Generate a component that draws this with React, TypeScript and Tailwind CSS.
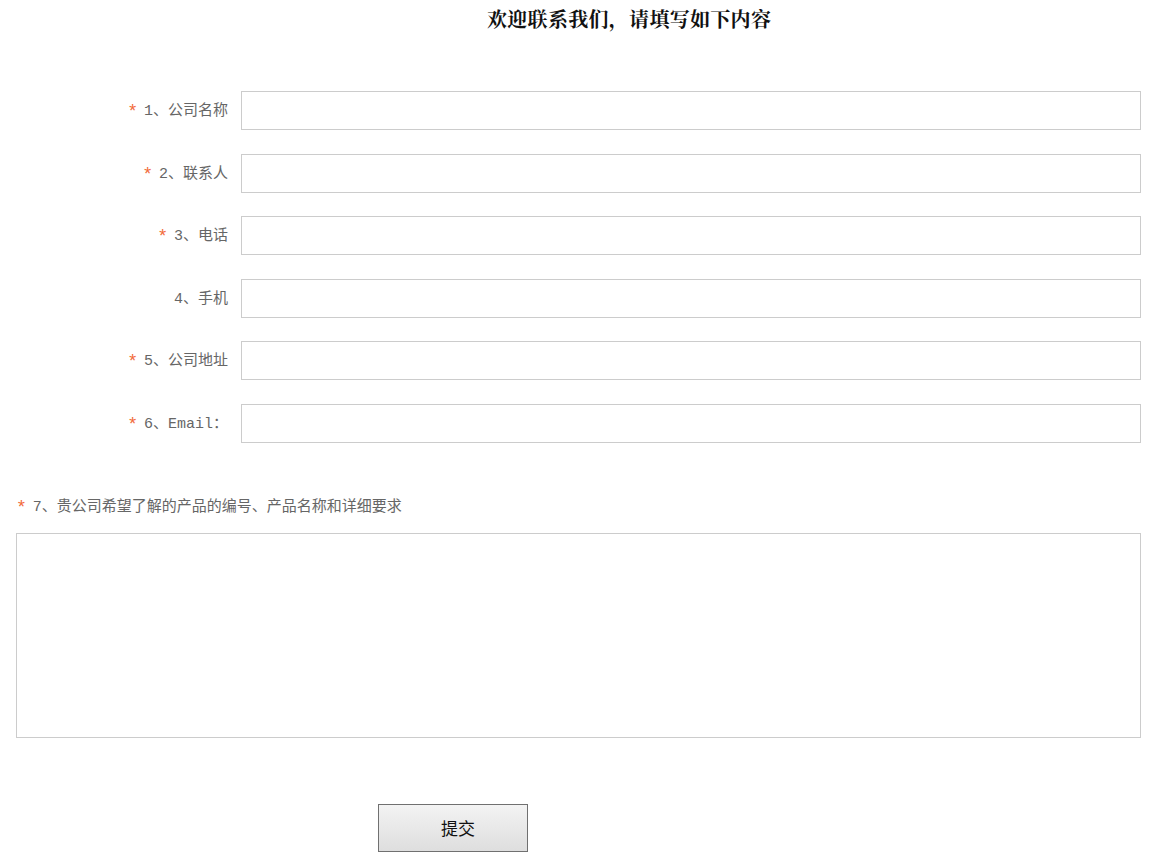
import React from "react";

const rows = [
  { req: true, label: "1、公司名称" },
  { req: true, label: "2、联系人" },
  { req: true, label: "3、电话" },
  { req: false, label: "4、手机" },
  { req: true, label: "5、公司地址" },
  { req: true, label: "6、Email：" },
];

const mono = '"Liberation Mono", "DejaVu Sans Mono", "Noto Sans CJK SC", monospace';

export default function App() {
  return (
    <div className="w-[1162px] h-[868px] bg-white text-[#666]">
      <h1
        className="pt-[8px] pl-[487px] text-[20px] leading-[22px] font-bold text-[#111] tracking-[0.3px]"
        style={{ fontFamily: '"Noto Serif CJK SC", "Liberation Serif", "Noto Sans CJK SC", serif' }}
      >
        欢迎联系我们，请填写如下内容
      </h1>
      <div className="mt-[61px] flex flex-col gap-[23.6px]">
        {rows.map((r) => (
          <div key={r.label} className="flex items-center">
            <div
              className="w-[228px] pt-[3px] text-right text-[15px] leading-[20px] flex justify-end items-center"
              style={{ fontFamily: mono }}
            >
              {r.req && (
                <span className="text-[#f26a3a] mr-[6px] text-[18px] leading-[20px]">*</span>
              )}
              <span>{r.label}</span>
            </div>
            <input className="ml-[13px] w-[900px] h-[39px] border border-[#ccc] outline-none" />
          </div>
        ))}
      </div>
      <div
        className="mt-[55px] pl-[16px] text-[15px] leading-[20px] flex items-center"
        style={{ fontFamily: mono }}
      >
        <span className="text-[#f26a3a] mr-[6px] text-[18px] leading-[20px]">*</span>
        <span>7、贵公司希望了解的产品的编号、产品名称和详细要求</span>
      </div>
      <textarea className="block ml-[16px] mt-[15px] w-[1125px] h-[205px] border border-[#ccc] outline-none resize-none" />
      <div className="pl-[378px] mt-[66px]">
        <button
          className="w-[150px] h-[48px] pl-[10px] border border-[#707070] bg-gradient-to-b from-[#f3f3f3] to-[#dedede] text-[17px] text-[#111]"
          style={{ fontFamily: '"Noto Sans CJK SC", sans-serif' }}
        >
          提交
        </button>
      </div>
    </div>
  );
}
